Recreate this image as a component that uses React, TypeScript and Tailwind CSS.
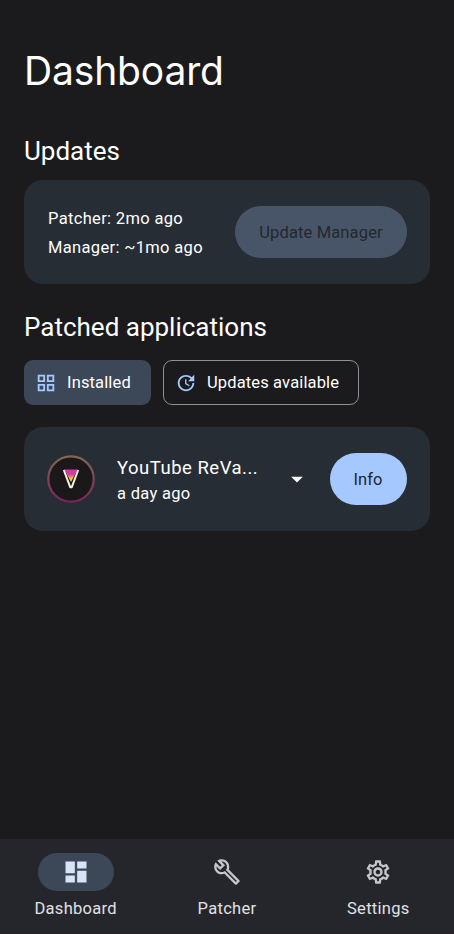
import { useId, type ReactNode } from 'react';
import {
  MdArrowDropDown,
  MdDashboard,
  MdOutlineBuild,
  MdOutlineGridView,
  MdOutlineSettings,
  MdUpdate,
} from 'react-icons/md';

function AppLogo() {
  const ring = useId();
  const gem = useId();
  return (
    <svg viewBox="0 0 48 48" className="h-12 w-12 shrink-0">
      <defs>
        <linearGradient id={ring} x1="0" y1="0" x2="0" y2="1">
          <stop offset="0" stopColor="#80694f" />
          <stop offset="1" stopColor="#7b2360" />
        </linearGradient>
        <linearGradient id={gem} x1="0" y1="0" x2="0" y2="1">
          <stop offset="0.35" stopColor="#cf3aa5" />
          <stop offset="0.55" stopColor="#e87b62" />
          <stop offset="0.75" stopColor="#f7c935" />
        </linearGradient>
      </defs>
      <circle cx="24" cy="24" r="22.7" fill="#1a1819" stroke={`url(#${ring})`} strokeWidth="2.2" />
      <path d="M17.2 14.5h13.6L24 27z" fill={`url(#${gem})`} />
      <path
        d="M16.8 15L23.2 32.2h1.6L31.2 15"
        fill="none"
        stroke="#fbf1e3"
        strokeWidth="2"
        strokeLinejoin="round"
      />
    </svg>
  );
}

function Card({ children }: { children: ReactNode }) {
  return (
    <div className="flex h-26 items-center justify-between rounded-[19px] bg-[#272d34] px-[23px]">{children}</div>
  );
}

function NavItem({ icon, label, active }: { icon: ReactNode; label: string; active?: boolean }) {
  return (
    <div className="flex flex-1 flex-col items-center text-[#c5c6cb]">
      <div
        className={`flex h-[38px] w-[76px] items-center justify-center rounded-full ${
          active ? 'bg-[#3c4858] text-[#d8e4f8]' : ''
        }`}
      >
        {icon}
      </div>
      <span className="mt-[6px] text-[16.5px] leading-6 tracking-[0.3px] text-[#e0e1e5]">{label}</span>
    </div>
  );
}

export default function App() {
  return (
    <div className="flex h-[934px] w-[454px] flex-col overflow-hidden bg-[#1b1b1d] font-[Roboto,sans-serif] text-white">
      <main className="flex-1 px-6 pt-[47px]">
        <h1 className="h-12 font-[Inter,sans-serif] text-[39px] leading-12 font-normal tracking-[-0.15px] whitespace-nowrap">
          Dashboard
        </h1>

        <h2 className="mt-[40px] h-8 text-[26px] leading-8">Updates</h2>
        <div className="mt-[13px]">
          <Card>
            <div className="pt-[2px] pl-px text-[16.5px] leading-[29px] tracking-[0.33px] whitespace-nowrap">
              <p>Patcher: 2mo ago</p>
              <p>Manager: ~1mo ago</p>
            </div>
            <button className="h-[52px] w-[172px] rounded-full bg-[#485568] pt-[2px] text-[16.5px] tracking-[0.14px] text-[#23272f]">
              Update Manager
            </button>
          </Card>
        </div>

        <h2 className="mt-[27px] h-8 text-[26px] leading-8 whitespace-nowrap">Patched applications</h2>
        <div className="mt-[17px] flex gap-3">
          <div className="flex h-[45px] w-[127px] items-center gap-[10px] rounded-[9px] bg-[#3c4858] pl-[11px] text-[16.5px] tracking-[0.14px]">
            <MdOutlineGridView className="size-[22px] shrink-0 text-[#a5c8ff]" />
            <span className="pt-[2px]">Installed</span>
          </div>
          <div className="flex h-[45px] w-[196px] items-center gap-[10px] rounded-[9px] border border-[#8d9199] pl-[11px] text-[16.5px] tracking-[0.14px] whitespace-nowrap">
            <MdUpdate className="size-[22px] shrink-0 text-[#a5c8ff]" />
            <span className="pt-[2px]">Updates available</span>
          </div>
        </div>

        <div className="mt-[22px]">
          <Card>
            <div className="flex items-center">
              <AppLogo />
              <div className="ml-[22px] w-[166px] pt-[3px] whitespace-nowrap">
                <p className="text-[18.5px] leading-[26px] tracking-[0.5px]">YouTube ReVa...</p>
                <p className="text-[16.5px] leading-[26px] tracking-[0.3px]">a day ago</p>
              </div>
              <MdArrowDropDown className="size-[28px]" />
            </div>
            <button className="h-[52px] w-[77px] rounded-full bg-[#a5c8ff] pt-[2px] pr-px text-[16.5px] tracking-[0.1px] text-[#1c2530]">
              Info
            </button>
          </Card>
        </div>
      </main>

      <nav className="flex h-[95px] border-b-2 border-[#2a2026] bg-[#25262b] pt-[14px]">
        <NavItem active label="Dashboard" icon={<MdDashboard className="size-7" />} />
        <NavItem label="Patcher" icon={<MdOutlineBuild className="size-7" />} />
        <NavItem label="Settings" icon={<MdOutlineSettings className="size-7" />} />
      </nav>
    </div>
  );
}
